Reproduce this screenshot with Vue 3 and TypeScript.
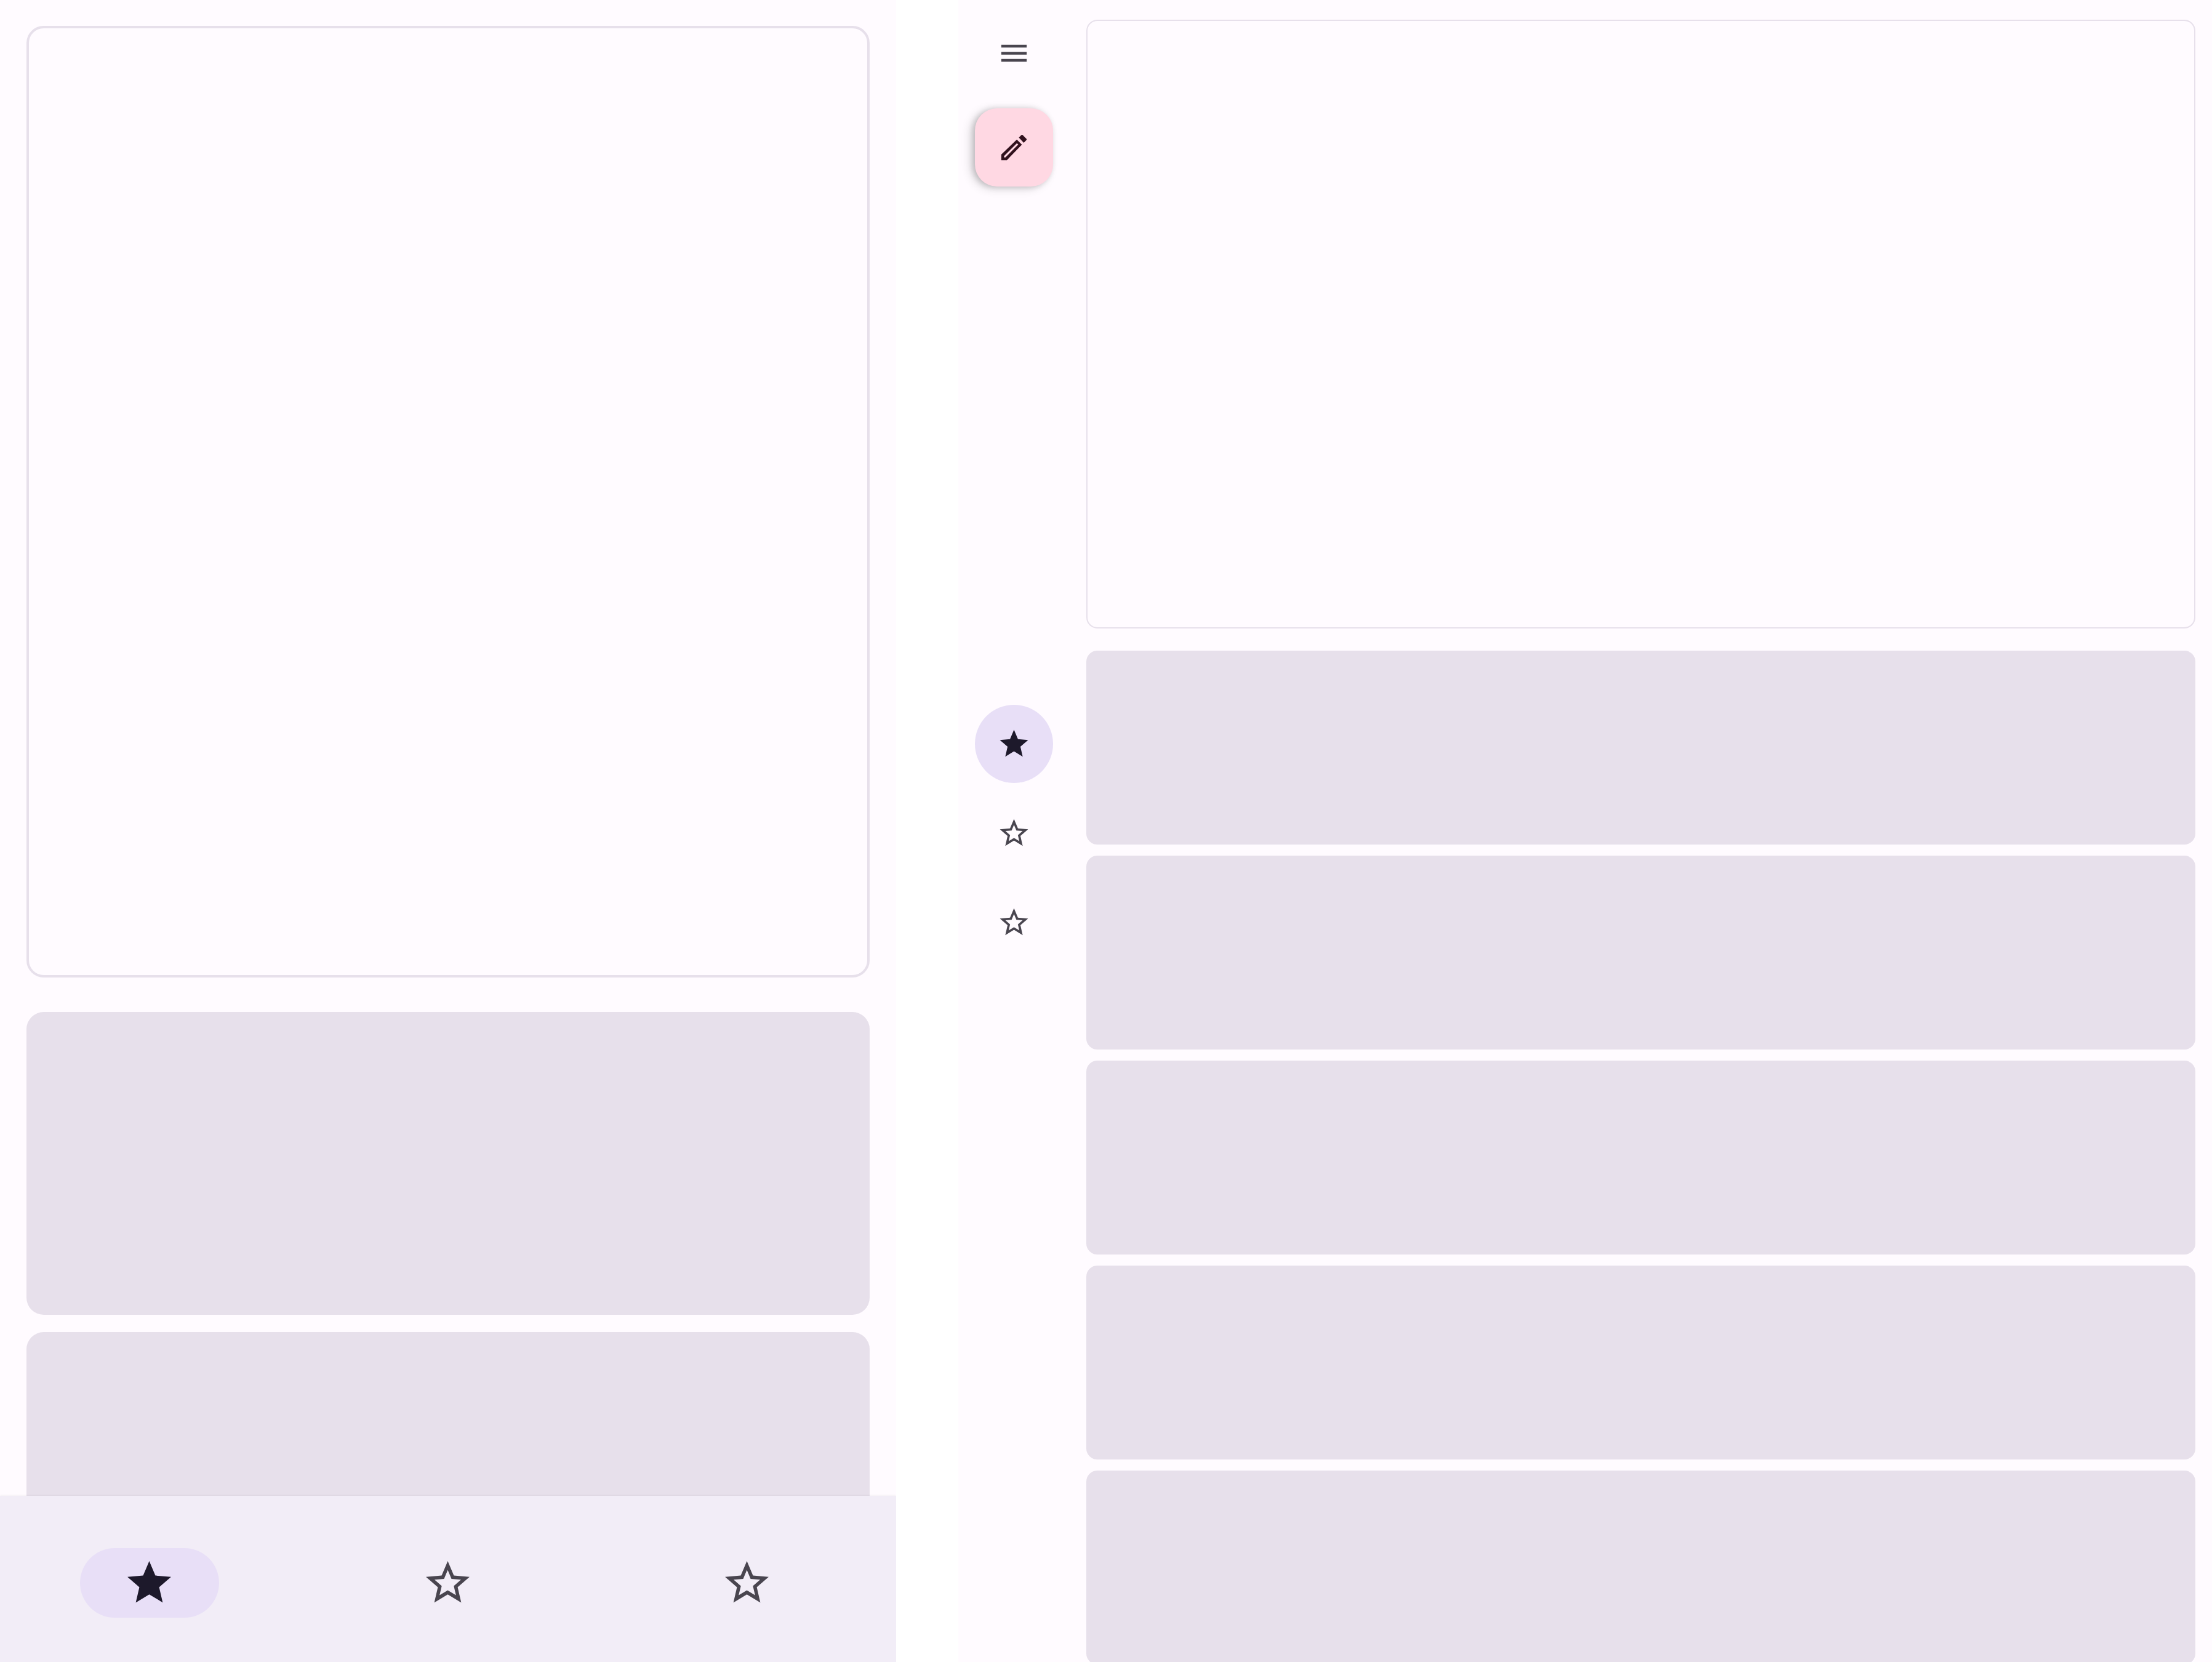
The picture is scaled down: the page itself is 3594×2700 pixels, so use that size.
<script setup lang="ts">
import { ref } from 'vue'

const starFilled = 'M12 17.27L18.18 21l-1.64-7.03L22 9.24l-7.19-.61L12 2 9.19 8.63 2 9.24l5.46 4.73L5.82 21z'
const starOutline =
  'M22 9.24l-7.19-.62L12 2 9.19 8.63 2 9.24l5.46 4.73L5.82 21 12 17.27 18.18 21l-1.63-7.03L22 9.24zM12 15.4l-3.76 2.27 1-4.28-3.32-2.88 4.38-.38L12 6.1l1.71 4.04 4.38.38-3.32 2.88 1 4.28L12 15.4z'

const destinations: number[] = [0, 1, 2]
const barActive = ref(0)
const railActive = ref(0)
</script>

<template>
  <div class="layouts">
    <section class="compact">
      <main class="feed">
        <article class="hero"></article>
        <div class="cards">
          <article v-for="n in 2" :key="n" class="card"></article>
        </div>
      </main>
      <nav class="bar">
        <button
          v-for="d in destinations"
          :key="d"
          type="button"
          class="bar-item"
          :class="{ active: d === barActive }"
          @click="barActive = d"
        >
          <span class="pill">
            <svg viewBox="0 0 24 24"><path :d="d === barActive ? starFilled : starOutline" /></svg>
          </span>
        </button>
      </nav>
    </section>

    <section class="expanded">
      <aside class="rail">
        <div class="rail-top">
          <button type="button" class="menu">
            <svg viewBox="0 0 24 24"><path d="M3 18h18v-2H3v2zm0-5h18v-2H3v2zm0-7v2h18V6H3z" /></svg>
          </button>
          <button type="button" class="fab">
            <svg viewBox="0 0 24 24">
              <path
                fill-rule="evenodd"
                d="M14 6.4L17.6 10.05 6.95 21H3v-3.95L14 6.4zM14.05 9L4.95 18.1v.95h.95L15.05 9.95zM15.45 5.05L17.3 3.2q.4-.4.8 0L20.8 5.9q.4.45 0 .9L18.95 8.7z"
              />
            </svg>
          </button>
        </div>
        <nav class="rail-nav">
          <button
            v-for="d in destinations"
            :key="d"
            type="button"
            class="rail-item"
            :class="{ active: d === railActive }"
            @click="railActive = d"
          >
            <svg viewBox="0 0 24 24"><path :d="d === railActive ? starFilled : starOutline" /></svg>
          </button>
        </nav>
      </aside>
      <main class="feed">
        <article class="hero"></article>
        <div class="cards">
          <article v-for="n in 5" :key="n" class="card"></article>
        </div>
      </main>
    </section>
  </div>
</template>

<style>
body {
  background: #ffffff;
}
</style>

<style scoped>
.layouts {
  display: flex;
  gap: 101px;
  height: 100vh;
  overflow: hidden;
  font-family: Roboto, sans-serif;
}

button {
  display: flex;
  align-items: center;
  justify-content: center;
  margin: 0;
  padding: 0;
  border: 0;
  background: none;
  color: #49454f;
  cursor: pointer;
}

svg {
  display: block;
  fill: currentColor;
}

.hero,
.card {
  box-sizing: border-box;
  flex: none;
}

.hero {
  border-style: solid;
  border-color: #e7e0eb;
}

.card {
  background: #e7e0eb;
}

.feed,
.cards {
  display: flex;
  flex-direction: column;
}

.compact {
  display: flex;
  flex: 1456 1 0;
  flex-direction: column;
  background: #fffbff;
}

.compact .feed {
  flex: 1;
  gap: 56px;
  min-height: 0;
  padding: 42px 43px 0;
  overflow: hidden;
}

.compact .cards {
  gap: 28px;
}

.compact .hero {
  height: 1546px;
  border-width: 4px;
  border-radius: 28px;
}

.compact .card {
  height: 492px;
  border-radius: 28px;
}

.bar {
  display: flex;
  position: relative;
  height: 270px;
  background: #f2edf7;
  box-shadow: 0 0 3px rgba(0, 0, 0, 0.08);
  clip-path: inset(-6px 0 0 0);
}

.bar-item {
  flex: 1;
  align-items: flex-start;
  padding-top: 85px;
}

.pill {
  display: flex;
  align-items: center;
  justify-content: center;
  width: 226px;
  height: 113px;
  border-radius: 57px;
}

.pill svg {
  width: 85px;
  height: 85px;
}

.active {
  color: #1d192b;
}

.active .pill,
.rail-item.active {
  background: #e8dff7;
}

.expanded {
  display: flex;
  flex: 2037 1 0;
  background: #fffbff;
}

.rail {
  display: grid;
  grid-template-rows: 1fr auto 1fr;
  justify-items: center;
  box-sizing: border-box;
  width: 181px;
  padding: 32px 0 25px;
}

.rail-top {
  display: flex;
  flex-direction: column;
  align-items: center;
  gap: 36px;
}

.rail svg {
  width: 55px;
  height: 55px;
}

.menu {
  width: 109px;
  height: 108px;
}

.fab {
  width: 127px;
  height: 127px;
  border-radius: 36px;
  background: #ffd8e3;
  color: #31111d;
  box-shadow:
    -3px 1px 10px rgba(0, 0, 0, 0.16),
    -7px 3px 16px rgba(0, 0, 0, 0.15);
}

.rail-nav {
  display: flex;
  flex-direction: column;
  gap: 18px;
}

.rail-item {
  width: 127px;
  height: 127px;
  border-radius: 50%;
}

.expanded .feed {
  flex: 1;
  gap: 36px;
  padding: 32px 27px 0;
}

.expanded .cards {
  gap: 18px;
}

.expanded .hero {
  height: 989px;
  border-width: 2px;
  border-radius: 18px;
}

.expanded .card {
  height: 315px;
  border-radius: 18px;
}
</style>
